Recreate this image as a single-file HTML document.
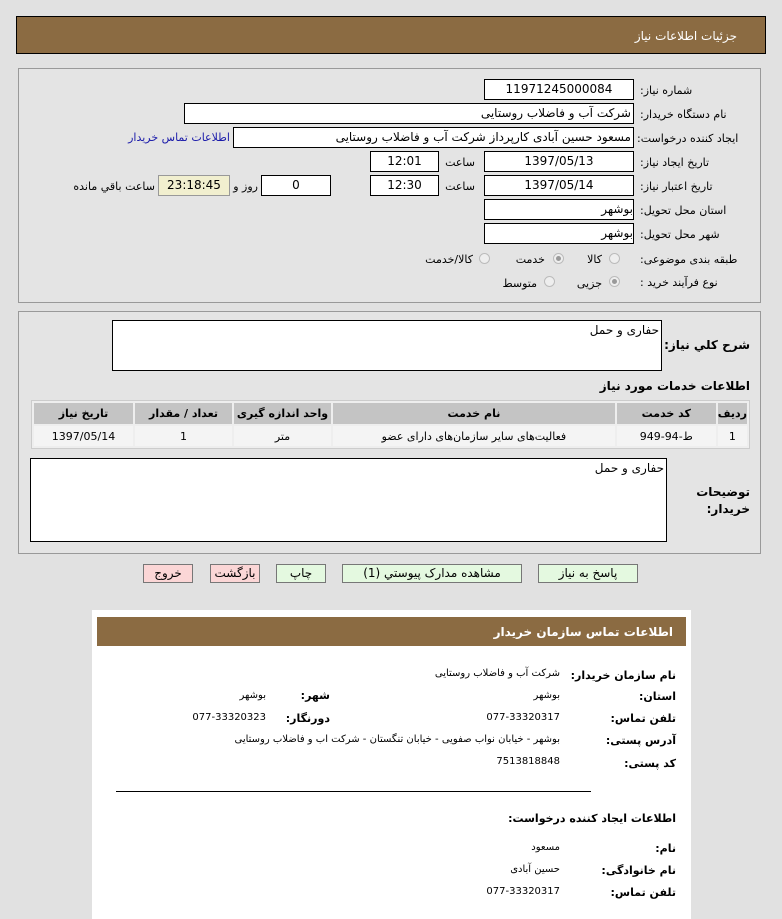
<!DOCTYPE html>
<html><head><meta charset="utf-8"><style>
*{box-sizing:border-box;margin:0;padding:0}
body{width:782px;height:919px;background:#e1e1e1;position:relative;overflow:hidden;font-family:"DejaVu Sans","Liberation Sans",sans-serif;font-size:11px;color:#000}
.a{position:absolute;white-space:nowrap}
.box{position:absolute;background:#fff;border:1px solid #000;direction:rtl;text-align:center;line-height:18px;font-size:12px}
.l{position:absolute;white-space:nowrap;direction:rtl;text-align:right}
.f{position:absolute;white-space:nowrap;direction:rtl;left:640px}
.b{font-weight:bold}
.rad{position:absolute;width:11px;height:11px;border-radius:50%;border:1px solid #bbb;background:#eee}
.rad.on::after{content:"";position:absolute;left:2px;top:2px;width:5px;height:5px;border-radius:50%;background:#999}
.btn{position:absolute;height:19px;border:1px solid #777;background:#e4f9e0;text-align:center;font-size:12px;line-height:17px}
.pk{background:#fbd6d6}
table{border-collapse:separate;border-spacing:2px;position:absolute;background:#eee;border:1px solid #ccc}
td,th{text-align:center;font-size:11px;height:21px}
th{background:#c4c4c4;font-weight:bold}
td{background:#f4f4f4;height:20px}
</style></head><body>
<div class="a" style="left:16px;top:16px;width:750px;height:38px;background:#8b6b42;border:1px solid #000"></div>
<div class="l" style="right:45px;top:29px;color:#fff;font-size:12px">جزئیات اطلاعات نیاز</div>

<div class="a" style="left:18px;top:68px;width:743px;height:235px;border:1px solid #999;background:#e4e4e4"></div>
<div class="f" style="top:84px">شماره نیاز:</div>
<div class="box" style="left:484px;top:79px;width:150px;height:21px">11971245000084</div>
<div class="f" style="top:108px">نام دستگاه خریدار:</div>
<div class="box" style="left:184px;top:103px;width:450px;height:21px;text-align:right;padding-right:2px">شرکت آب و فاضلاب روستایی</div>
<div class="f" style="top:132px;left:637px">ایجاد کننده درخواست:</div>
<div class="box" style="left:233px;top:127px;width:401px;height:21px;text-align:right;padding-right:2px">مسعود حسین آبادی کارپرداز شرکت آب و فاضلاب روستایی</div>
<div class="l" style="right:552px;top:131px;color:#1a1aaa">اطلاعات تماس خریدار</div>
<div class="f" style="top:156px">تاریخ ایجاد نیاز:</div>
<div class="box" style="left:484px;top:151px;width:150px;height:21px">1397/05/13</div>
<div class="l" style="right:307px;top:156px">ساعت</div>
<div class="box" style="left:370px;top:151px;width:69px;height:21px">12:01</div>
<div class="f" style="top:180px">تاریخ اعتبار نیاز:</div>
<div class="box" style="left:484px;top:175px;width:150px;height:21px">1397/05/14</div>
<div class="l" style="right:307px;top:180px">ساعت</div>
<div class="box" style="left:370px;top:175px;width:69px;height:21px">12:30</div>
<div class="box" style="left:261px;top:175px;width:70px;height:21px">0</div>
<div class="l" style="right:524px;top:180px">روز و</div>
<div class="box" style="left:158px;top:175px;width:72px;height:21px;background:#f1efcf;border-color:#999">23:18:45</div>
<div class="l" style="right:627px;top:180px">ساعت باقي مانده</div>
<div class="f" style="top:204px">استان محل تحویل:</div>
<div class="box" style="left:484px;top:199px;width:150px;height:21px;text-align:right">بوشهر</div>
<div class="f" style="top:228px">شهر محل تحویل:</div>
<div class="box" style="left:484px;top:223px;width:150px;height:21px;text-align:right">بوشهر</div>
<div class="f" style="top:253px">طبقه بندی موضوعی:</div>
<div class="rad" style="left:609px;top:253px"></div><div class="l" style="right:180px;top:253px">کالا</div>
<div class="rad on" style="left:553px;top:253px"></div><div class="l" style="right:237px;top:253px">خدمت</div>
<div class="rad" style="left:479px;top:253px"></div><div class="l" style="right:309px;top:253px">کالا/خدمت</div>
<div class="f" style="top:276px">نوع فرآیند خرید :</div>
<div class="rad on" style="left:609px;top:276px"></div><div class="l" style="right:180px;top:277px">جزیی</div>
<div class="rad" style="left:544px;top:276px"></div><div class="l" style="right:245px;top:277px">متوسط</div>

<div class="a" style="left:18px;top:311px;width:743px;height:243px;border:1px solid #999;background:#e4e4e4"></div>
<div class="box" style="left:112px;top:320px;width:550px;height:51px;text-align:right;padding-right:2px">حفاری و حمل</div>
<div class="l b" style="right:32px;top:338px;font-size:12px">شرح کلي نياز:</div>
<div class="l b" style="right:32px;top:379px;font-size:12px">اطلاعات خدمات مورد نیاز</div>
<table style="left:31px;top:400px;width:719px">
<tr><th style="width:99px">تاریخ نیاز</th><th style="width:97px">تعداد / مقدار</th><th style="width:97px">واحد اندازه گیری</th><th>نام خدمت</th><th style="width:99px">کد خدمت</th><th style="width:25px">ردیف</th></tr>
<tr><td>1397/05/14</td><td>1</td><td>متر</td><td style="direction:rtl">فعالیت‌های سایر سازمان‌های دارای عضو</td><td>ط-94-949</td><td>1</td></tr>
</table>
<div class="box" style="left:30px;top:458px;width:637px;height:84px;text-align:right;padding-right:2px">حفاری و حمل</div>
<div class="l b" style="right:32px;top:484px;font-size:12px;line-height:17px;white-space:normal;width:60px">توضیحات خریدار:</div>

<div class="btn" style="left:538px;top:564px;width:100px">پاسخ به نیاز</div>
<div class="btn" style="left:342px;top:564px;width:180px">مشاهده مدارک پیوستي (1)</div>
<div class="btn" style="left:276px;top:564px;width:50px">چاپ</div>
<div class="btn pk" style="left:210px;top:564px;width:50px">بازگشت</div>
<div class="btn pk" style="left:143px;top:564px;width:50px">خروج</div>

<div class="a" style="left:92px;top:610px;width:599px;height:309px;background:#fff"></div>
<div class="a" style="left:97px;top:617px;width:589px;height:29px;background:#8b6b42"></div>
<div class="l b" style="right:109px;top:625px;color:#fff;font-size:12px">اطلاعات تماس سازمان خریدار</div>
<div class="l b" style="right:106px;top:669px">نام سازمان خریدار:</div>
<div class="l" style="right:222px;top:668px;font-size:10px">شرکت آب و فاضلاب روستایی</div>
<div class="l b" style="right:106px;top:690px">استان:</div>
<div class="l" style="right:222px;top:690px;font-size:10px">بوشهر</div>
<div class="l b" style="right:452px;top:689px">شهر:</div>
<div class="l" style="right:516px;top:690px;font-size:10px">بوشهر</div>
<div class="l b" style="right:106px;top:712px">تلفن تماس:</div>
<div class="l" style="right:222px;top:712px;font-size:10px">077-33320317</div>
<div class="l b" style="right:452px;top:712px">دورنگار:</div>
<div class="l" style="right:516px;top:712px;font-size:10px">077-33320323</div>
<div class="l b" style="right:106px;top:734px">آدرس پستی:</div>
<div class="l" style="right:222px;top:734px;font-size:10px">بوشهر - خیابان نواب صفویی - خیابان تنگستان - شرکت اب و فاضلاب روستایی</div>
<div class="l b" style="right:106px;top:757px">کد پستی:</div>
<div class="l" style="right:222px;top:756px;font-size:10px">7513818848</div>
<div class="a" style="left:116px;top:791px;width:475px;height:1px;background:#000"></div>
<div class="l b" style="right:106px;top:812px">اطلاعات ایجاد کننده درخواست:</div>
<div class="l b" style="right:106px;top:842px">نام:</div>
<div class="l" style="right:222px;top:842px;font-size:10px">مسعود</div>
<div class="l b" style="right:106px;top:864px">نام خانوادگی:</div>
<div class="l" style="right:222px;top:864px;font-size:10px">حسین آبادی</div>
<div class="l b" style="right:106px;top:886px">تلفن تماس:</div>
<div class="l" style="right:222px;top:886px;font-size:10px">077-33320317</div>
</body></html>
